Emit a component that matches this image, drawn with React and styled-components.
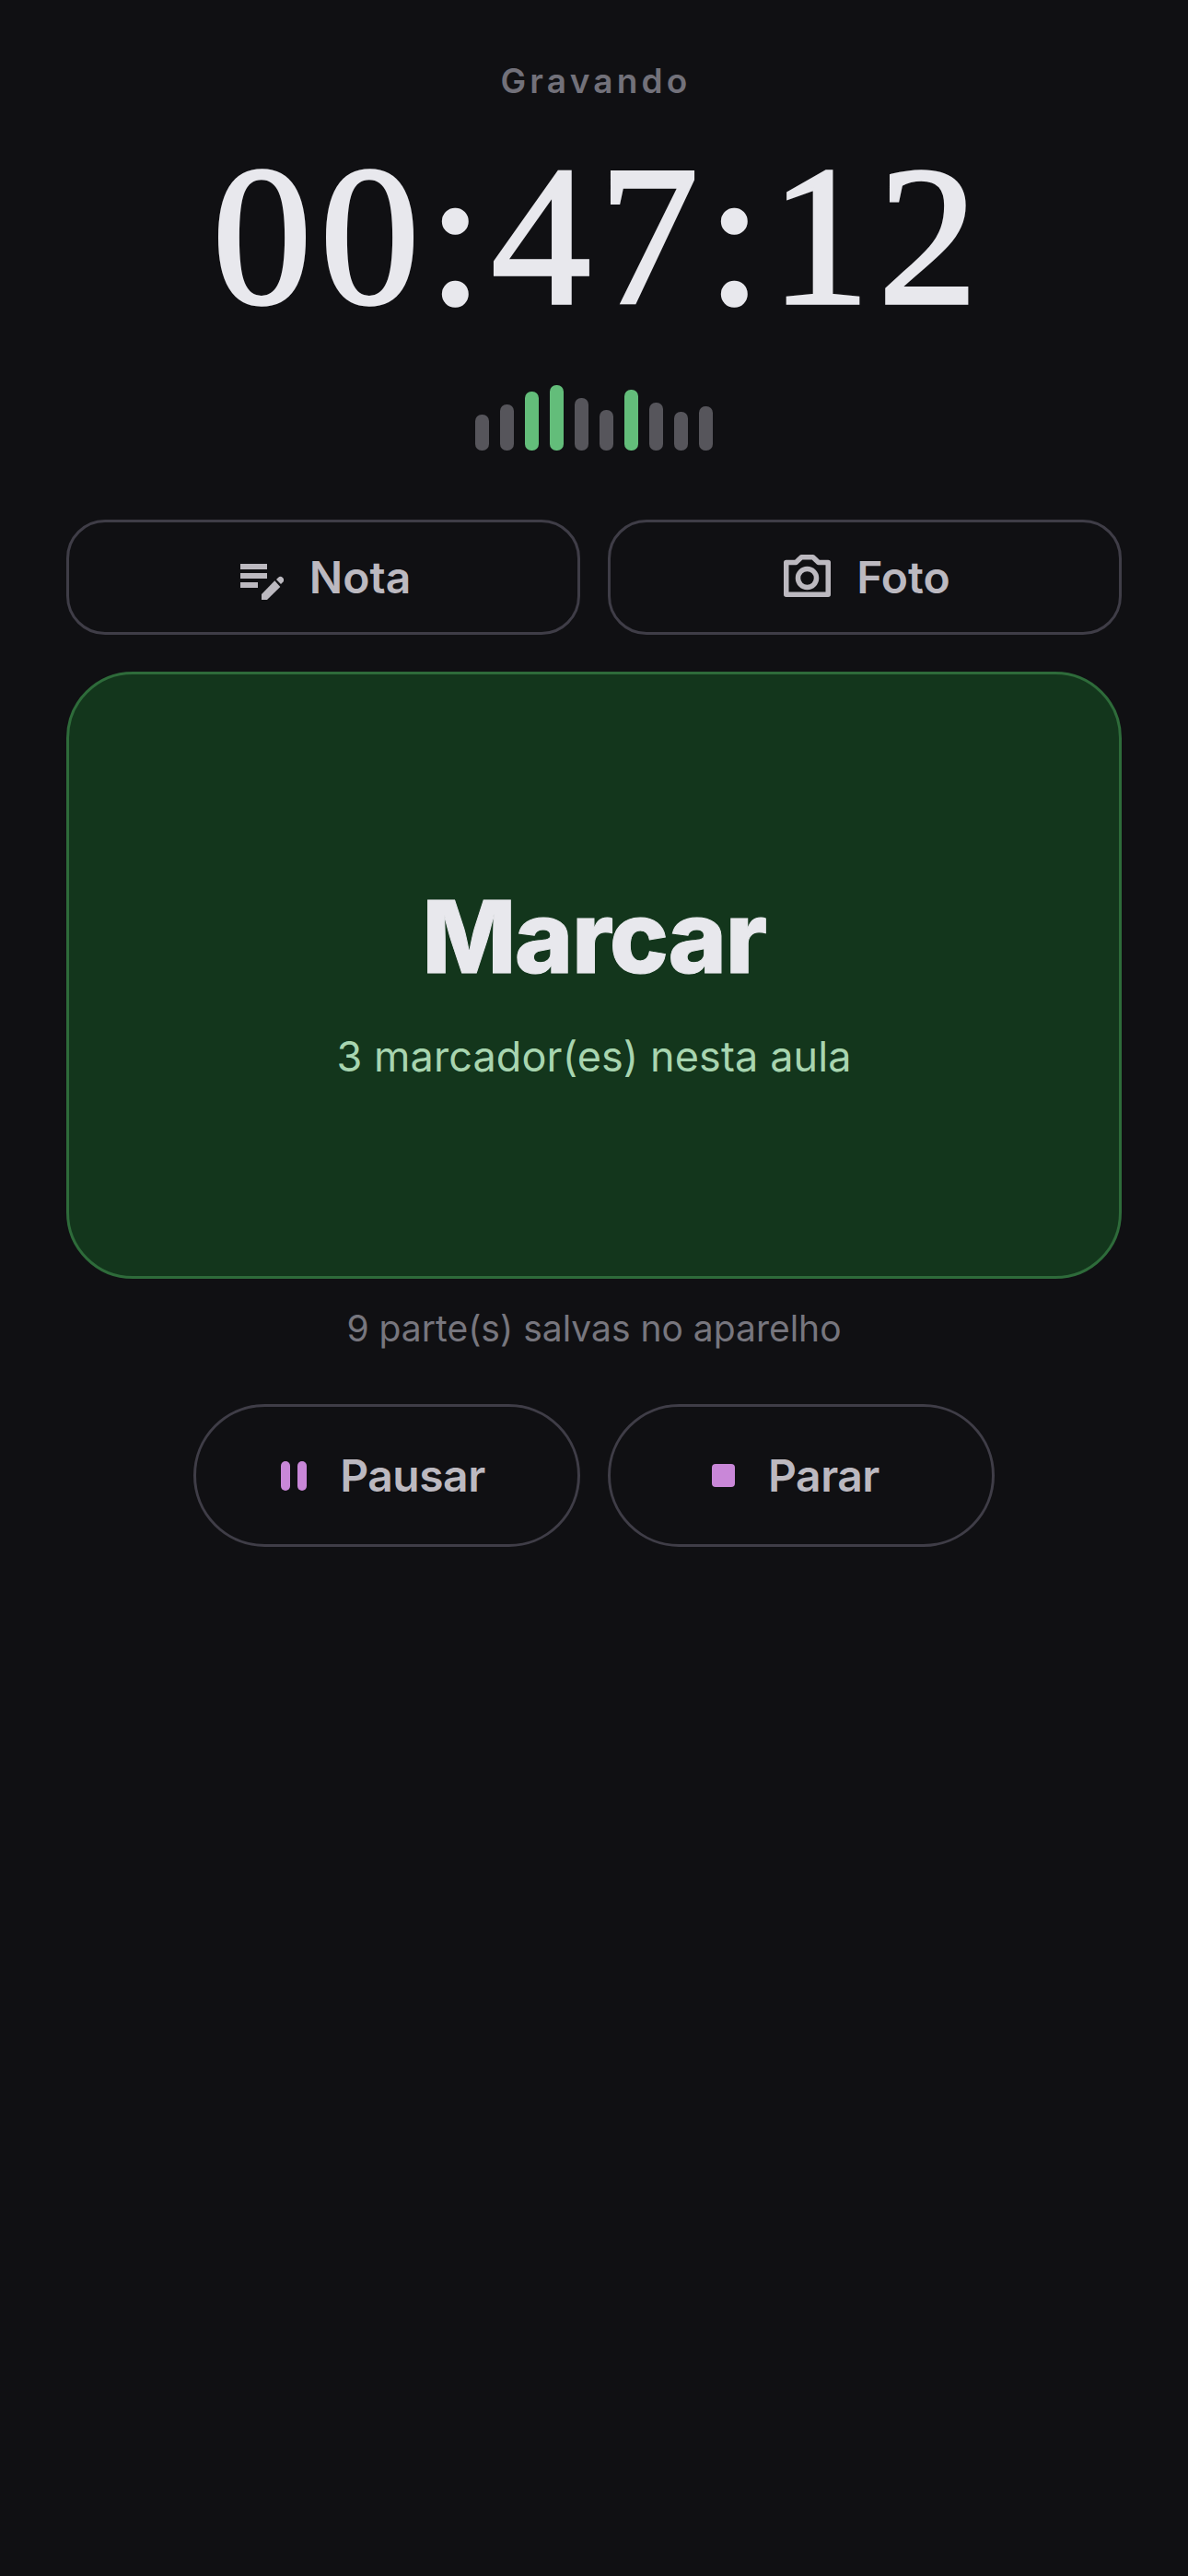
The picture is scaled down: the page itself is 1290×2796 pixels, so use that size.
import React from 'react';
import styled, { createGlobalStyle } from 'styled-components';

const GlobalStyle = createGlobalStyle`
  html, body {
    margin: 0;
    background: #101013;
  }
  body {
    font-family: Inter, "Liberation Sans", sans-serif;
  }
`;

const Page = styled.main`
  box-sizing: border-box;
  min-height: 2796px;
  padding: 64px 72px 0;
  display: flex;
  flex-direction: column;
  align-items: center;
  background: #101013;
`;

const Status = styled.div`
  padding-left: 4px;
  font-size: 37px;
  line-height: 48px;
  font-weight: 600;
  letter-spacing: 4.2px;
  color: #72717a;
`;

const Timer = styled.div`
  margin-top: 37px;
  padding-left: 11px;
  font-family: "Liberation Serif", serif;
  font-size: 216px;
  line-height: 216px;
  letter-spacing: 9px;
  -webkit-text-stroke: 3.5px #e8e8ed;
  color: #e8e8ed;
`;

const Meter = styled.div`
  margin-top: 52px;
  height: 72px;
  display: flex;
  align-items: flex-end;
  gap: 12px;
`;

const Bar = styled.span`
  width: 15px;
  height: ${(p) => p.$h}px;
  border-radius: 7px;
  background: ${(p) => (p.$on ? '#63bd7a' : '#56555b')};
`;

const ActionRow = styled.div`
  margin-top: 75px;
  width: 100%;
  display: flex;
  gap: 30px;
`;

const ActionButton = styled.button`
  flex: 1;
  height: 125px;
  box-sizing: border-box;
  padding: 0 0 0 5px;
  display: flex;
  align-items: center;
  justify-content: center;
  gap: 28px;
  background: transparent;
  border: 3px solid #3f3d47;
  border-radius: 42px;
  font-family: inherit;
  font-size: 48px;
  font-weight: 600;
  color: #bcb9c0;
`;

const MarkCard = styled.div`
  margin-top: 40px;
  width: 100%;
  height: 659px;
  box-sizing: border-box;
  padding-top: 11px;
  display: flex;
  flex-direction: column;
  align-items: center;
  justify-content: center;
  background: #13361c;
  border: 3px solid #2e6b3a;
  border-radius: 72px;
`;

const MarkTitle = styled.div`
  font-size: 108px;
  line-height: 130px;
  font-weight: 800;
  letter-spacing: -1.5px;
  -webkit-text-stroke: 1px #e8e8ed;
  color: #e8e8ed;
`;

const MarkCount = styled.div`
  margin-top: 35px;
  font-size: 45px;
  line-height: 60px;
  letter-spacing: 0.1px;
  color: #a8d5b0;
`;

const Parts = styled.div`
  margin-top: 30px;
  font-size: 39px;
  line-height: 48px;
  color: #77767e;
`;

const ControlRow = styled.div`
  margin-top: 58px;
  display: flex;
  gap: 30px;
`;

const ControlButton = styled.button`
  width: 420px;
  height: 155px;
  box-sizing: border-box;
  padding: 0 ${(p) => p.$inset}px 0 0;
  display: flex;
  align-items: center;
  justify-content: center;
  gap: 36px;
  background: transparent;
  border: 3px solid #3f3d47;
  border-radius: 78px;
  font-family: inherit;
  font-size: 48px;
  font-weight: 600;
  letter-spacing: -0.5px;
  color: #bcb9c0;
`;

const PauseIcon = styled.span`
  display: flex;
  gap: 8px;
`;

const PauseBar = styled.span`
  width: 10px;
  height: 32px;
  border-radius: 5px;
  background: #c987d8;
`;

const StopIcon = styled.span`
  width: 25px;
  height: 25px;
  border-radius: 4px;
  background: #c987d8;
`;

const NoteIcon = () => (
  <svg width="47" height="50" viewBox="0 -10 47 50" fill="#bcb9c0">
    <path d="M0 0h29v6H0zM0 10h29v6H0zM0 20h19v6H0z" />
    <path d="M23 39v-6L37.3 18.3 43.3 25 29 39z" />
    <path d="M39 17l2-2a3.5 3.5 0 0 1 5 0 3.5 3.5 0 0 1 0 5l-2 2z" />
  </svg>
);

const CameraIcon = () => (
  <svg width="51" height="50" viewBox="0 0 51 50" fill="none" stroke="#bcb9c0" strokeWidth="5.5" strokeLinejoin="round">
    <path d="M2.750 8.500h10.500l6-5.750h12.500l6 5.750h10.500v34.750h-45.500z" />
    <circle cx="25.500" cy="25.500" r="10" />
  </svg>
);

const levels = [
  { h: 39 },
  { h: 50 },
  { h: 64, on: true },
  { h: 71, on: true },
  { h: 57 },
  { h: 44 },
  { h: 66, on: true },
  { h: 52 },
  { h: 42 },
  { h: 48 },
];

export default function App() {
  return (
    <>
      <GlobalStyle />
      <Page>
        <Status>Gravando</Status>
        <Timer>00:47:12</Timer>
        <Meter>
          {levels.map((l, i) => (
            <Bar key={i} $h={l.h} $on={l.on} />
          ))}
        </Meter>
        <ActionRow>
          <ActionButton><NoteIcon />Nota</ActionButton>
          <ActionButton><CameraIcon />Foto</ActionButton>
        </ActionRow>
        <MarkCard>
          <MarkTitle>Marcar</MarkTitle>
          <MarkCount>3 marcador(es) nesta aula</MarkCount>
        </MarkCard>
        <Parts>9 parte(s) salvas no aparelho</Parts>
        <ControlRow>
          <ControlButton $inset={8}>
            <PauseIcon><PauseBar /><PauseBar /></PauseIcon>
            Pausar
          </ControlButton>
          <ControlButton $inset={12}>
            <StopIcon />
            Parar
          </ControlButton>
        </ControlRow>
      </Page>
    </>
  );
}
